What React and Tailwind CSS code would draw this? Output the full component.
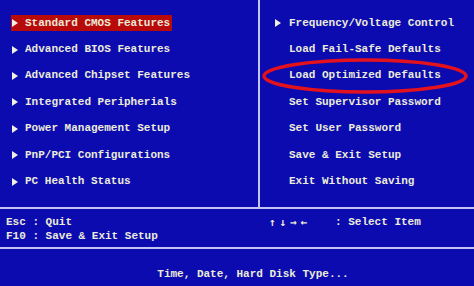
const leftItems = [
  'Standard CMOS Features',
  'Advanced BIOS Features',
  'Advanced Chipset Features',
  'Integrated Peripherials',
  'Power Management Setup',
  'PnP/PCI Configurations',
  'PC Health Status',
]

const rightItems = [
  { label: 'Frequency/Voltage Control', arrow: true },
  { label: 'Load Fail-Safe Defaults' },
  { label: 'Load Optimized Defaults' },
  { label: 'Set Supervisor Password' },
  { label: 'Set User Password' },
  { label: 'Save & Exit Setup' },
  { label: 'Exit Without Saving' },
]

function Arrow() {
  return (
    <svg width="6" height="8" viewBox="0 0 6 8" className="shrink-0">
      <path d="M0 0 L6 4 L0 8 Z" fill="#f0f0e4" />
    </svg>
  )
}

export default function App() {
  return (
    <div
      className="relative w-[474px] h-[286px] overflow-hidden bg-[#0b0bb0] text-[#ecebd8] font-bold text-[11px] leading-none"
      style={{ fontFamily: '"Liberation Mono", "DejaVu Sans Mono", monospace' }}
    >
      {/* Menu area */}
      <div className="flex h-[207px]">
        <div className="w-[258px] pt-[10px]">
          {leftItems.map((item, i) => (
            <div key={item} className="h-[26.4px] flex items-center">
              <div
                className={`flex items-center h-[16px] ml-[11px] pl-[1px] pr-[2px] ${
                  i === 0 ? 'bg-[#b80a0a]' : ''
                }`}
              >
                <Arrow />
                <span className="ml-[7px]">{item}</span>
              </div>
            </div>
          ))}
        </div>
        <div className="w-[2px] bg-[#c4c4f2]" />
        <div className="flex-1 pt-[10px] pl-[15px]">
          {rightItems.map((item) => (
            <div key={item.label} className="h-[26.4px] flex items-center">
              <div className="w-[14px] flex items-center">{item.arrow && <Arrow />}</div>
              <span>{item.label}</span>
            </div>
          ))}
        </div>
      </div>

      <div className="h-[2px] bg-[#c4c4f2]" />

      {/* Key help */}
      <div className="flex h-[38px] pt-[7px]">
        <div className="w-[260px] pl-[6px] flex flex-col gap-[2px]">
          <div className="h-[12px] flex items-center">Esc : Quit</div>
          <div className="h-[12px] flex items-center">F10 : Save &amp; Exit Setup</div>
        </div>
        <div className="flex-1 pl-[9px]">
          <div className="h-[12px] flex items-center">
            <span
              className="w-[66px] text-[11px] tracking-[4px] text-[#ecebd8]"
              style={{ fontFamily: '"DejaVu Sans Mono", monospace' }}
            >
              ↑↓→←
            </span>
            <span>: Select Item</span>
          </div>
        </div>
      </div>

      <div className="h-[2px] bg-[#c4c4f2]" />

      <div className="h-[37px] flex items-center justify-center pl-[32px] pt-[13px]">
        Time, Date, Hard Disk Type...
      </div>

      {/* red marker circle */}
      <svg
        className="absolute left-0 top-0 pointer-events-none"
        width="474"
        height="286"
        viewBox="0 0 474 286"
      >
        <ellipse cx="365" cy="76" rx="101" ry="16" fill="none" stroke="#e3121d" strokeWidth="3.5" />
      </svg>
    </div>
  )
}
